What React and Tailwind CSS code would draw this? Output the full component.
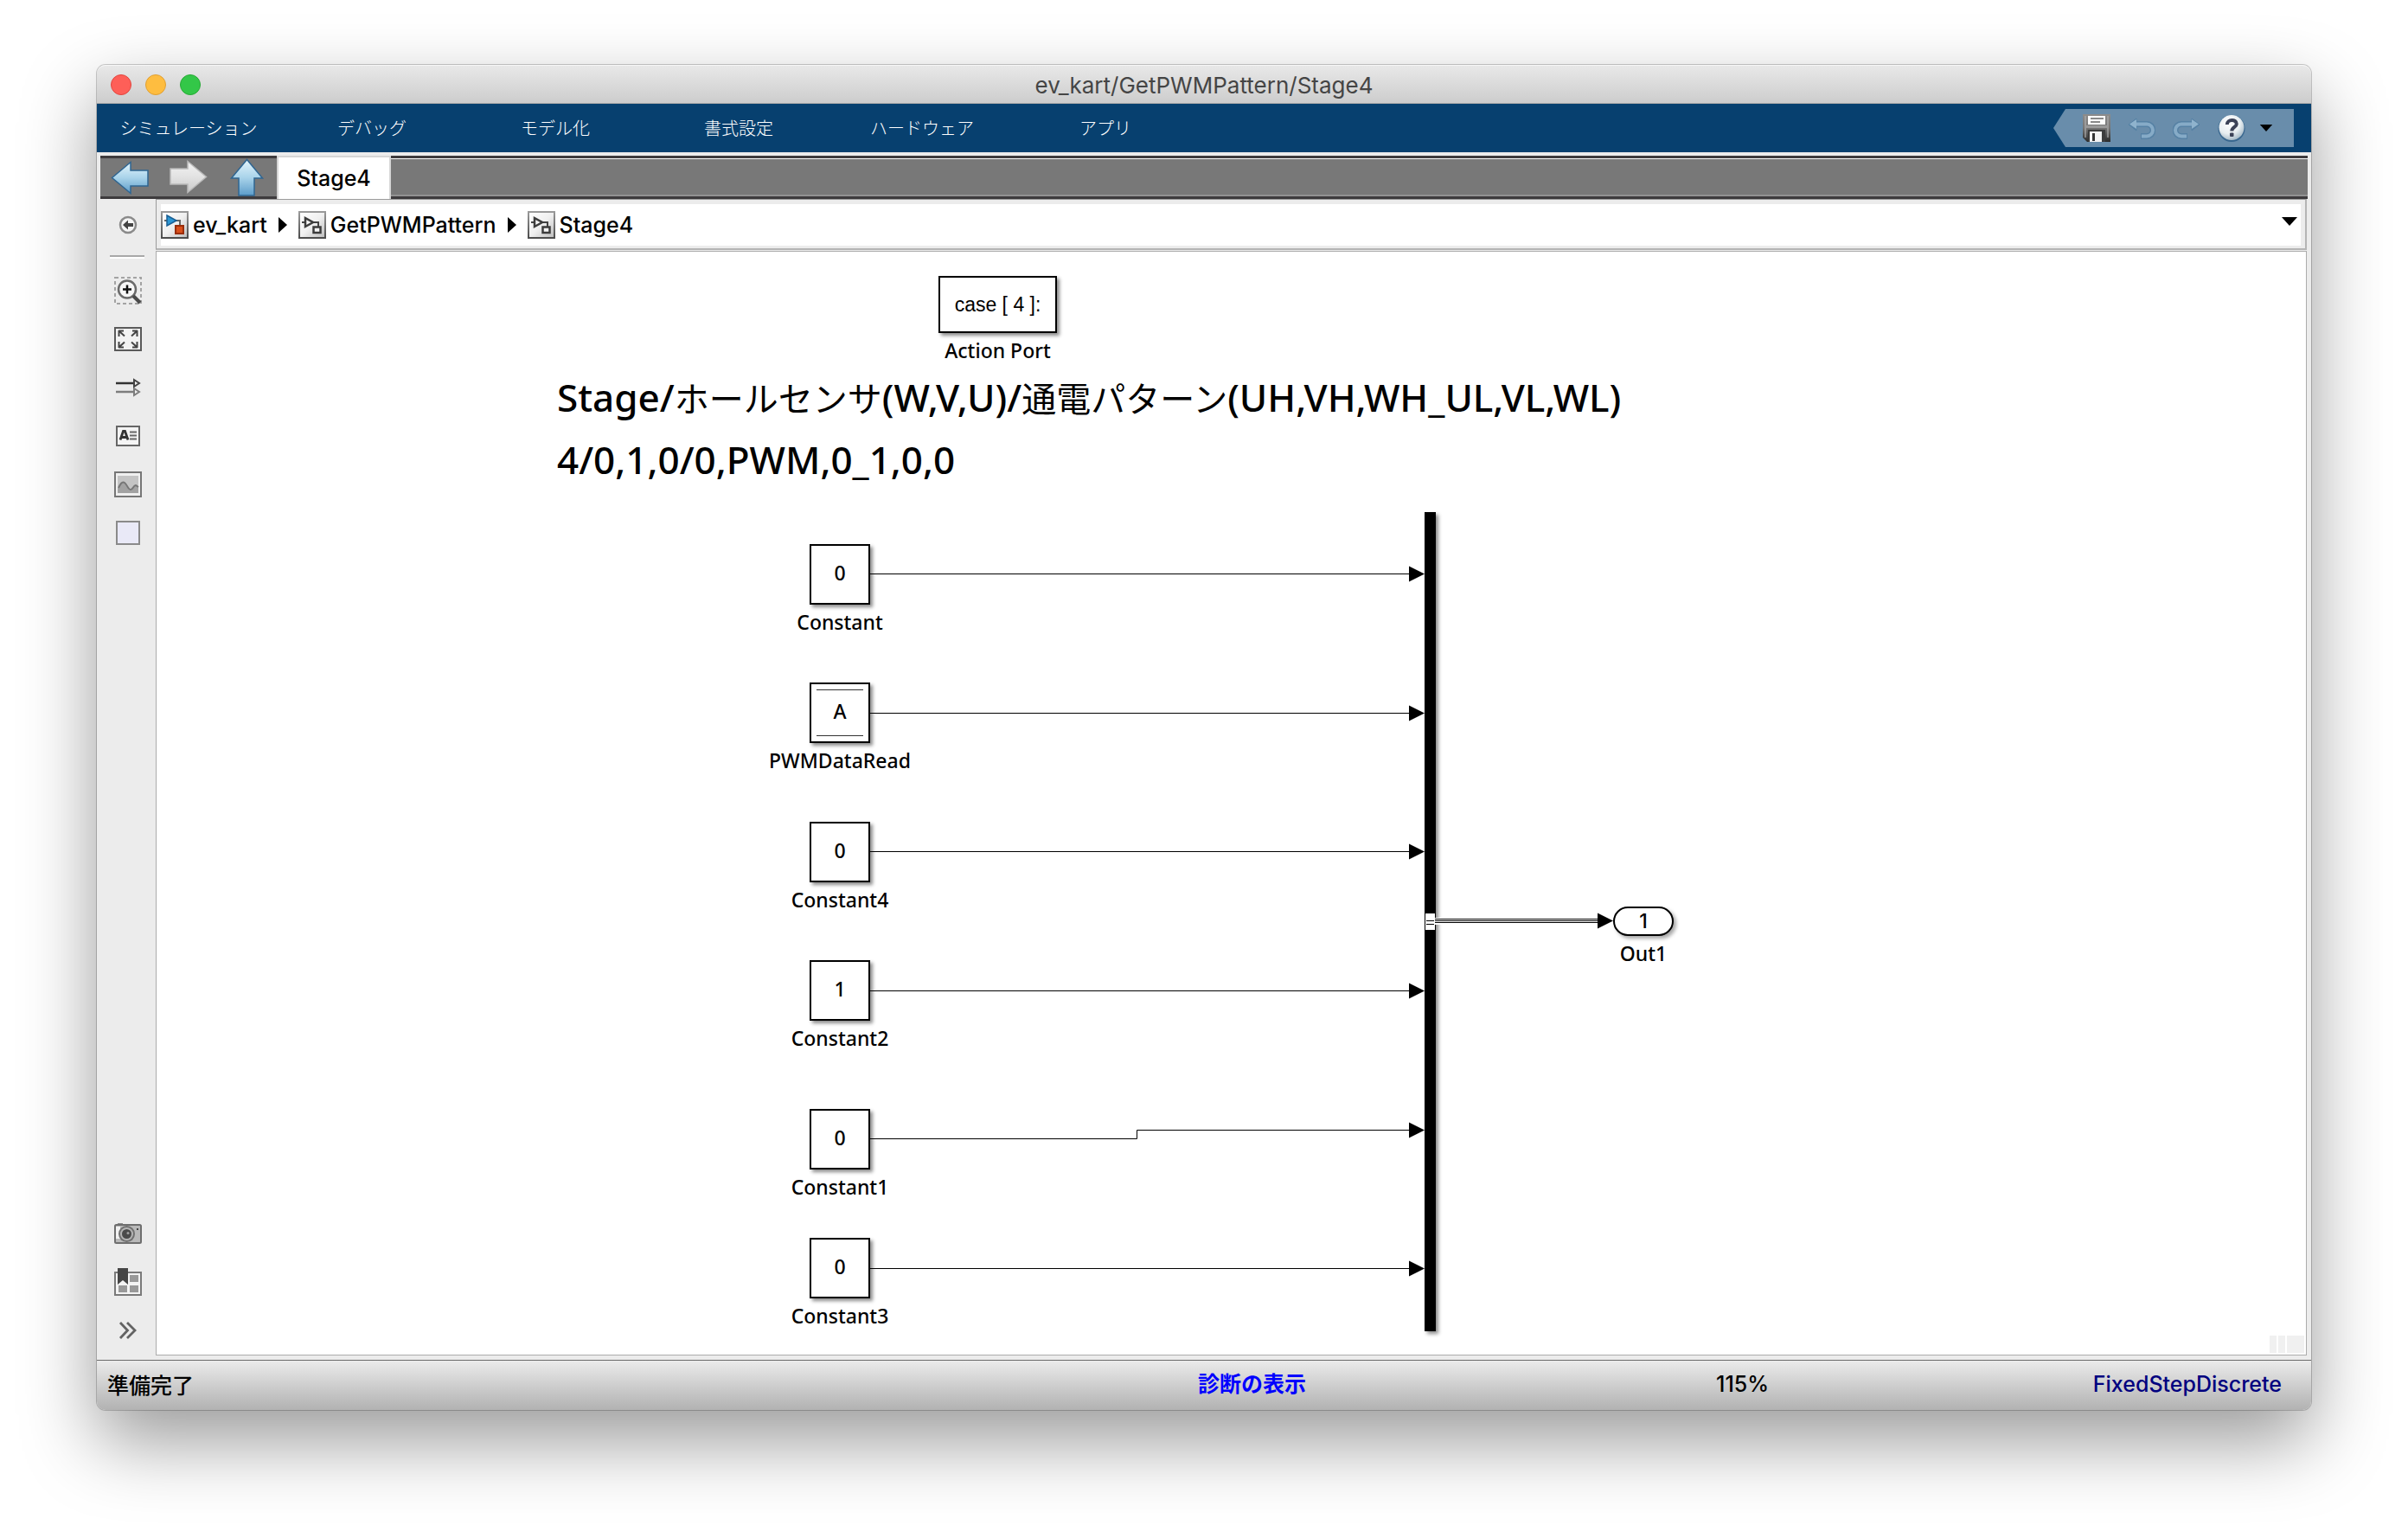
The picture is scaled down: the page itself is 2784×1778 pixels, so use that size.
import React from "react";

const UI = "font-[Inter,'Noto_Sans_CJK_JP',sans-serif]";
const LUCIDA = "font-['Noto_Sans','Noto_Sans_CJK_JP',sans-serif]";

const menus = ["シミュレーション", "デバッグ", "モデル化", "書式設定", "ハードウェア", "アプリ"];

/* ---------- title bar and tool strip icons ---------- */

function SaveIcon() {
  return (
    <svg viewBox="0 0 32 32" className="size-8" aria-hidden="true">
      <defs>
        <linearGradient id="disk" x1="0" y1="0" x2="0" y2="1">
          <stop offset="0" stopColor="#8c8c8c" />
          <stop offset=".5" stopColor="#757575" />
          <stop offset="1" stopColor="#2b2b2b" />
        </linearGradient>
      </defs>
      <path d="M0 0h32v32H5l-5-5z" fill="url(#disk)" />
      <path d="M2 2h2v11h24V2h2v25h-2V16H4v11H2z" fill="#b0b0b0" opacity=".6" />
      <path d="M6 2h20v10H6z" fill="#fdfdfd" />
      <path d="M9 5h15M9 9h11" stroke="#8a8a8a" strokeWidth="2" />
      <path d="M6 18h20v14H6z" fill="#3d3d3d" />
      <path d="M8 20h14v12H8z" fill="#f2f2f2" />
      <path d="M11 22h3v9h-3z" fill="#333" />
    </svg>
  );
}

function UndoIcon({ flip }) {
  return (
    <svg viewBox="0 0 32 32" className="size-8" aria-hidden="true">
      <g transform={flip ? "translate(32 0) scale(-1 1)" : undefined} fill="none">
        <path d="M7 11.500H22a6.500 6.500 0 0 1 0 14H15" stroke="#5681a4" strokeWidth="7" />
        <path d="M1 12L10 5v14z" fill="#5681a4" stroke="#5681a4" strokeWidth="1" />
        <path d="M8 11.500H22a6.500 6.500 0 0 1 0 14H16" stroke="#86abc7" strokeWidth="4" />
        <path d="M2 11.500L10 6v11z" fill="#8fb3cd" />
      </g>
    </svg>
  );
}

function HelpIcon() {
  return (
    <svg viewBox="0 0 32 32" className="size-8" aria-hidden="true">
      <defs>
        <radialGradient id="ball" cx=".4" cy=".3" r=".75">
          <stop offset="0" stopColor="#ffffff" />
          <stop offset=".6" stopColor="#e8eef1" />
          <stop offset="1" stopColor="#9fb4c2" />
        </radialGradient>
      </defs>
      <circle cx="16" cy="16.500" r="15.500" fill="#39678f" />
      <circle cx="16" cy="15.500" r="14.500" fill="url(#ball)" />
      <path d="M10.800 12c0-6.500 11-6.500 11-.8 0 4-5.500 3.500-5.500 8.300" fill="none" stroke="#3c4257" strokeWidth="4" />
      <rect x="14" y="21.500" width="4.500" height="4.500" rx="1" fill="#3c4257" />
    </svg>
  );
}

function Caret({ className }) {
  return (
    <svg viewBox="0 0 18 10" className={className} aria-hidden="true">
      <path d="M0 0h18L9 10z" fill="#000" />
    </svg>
  );
}

function NavArrow({ turn, muted }) {
  const id = muted ? "arrowMuted" : "arrowBlue" + turn;
  return (
    <svg viewBox="0 0 44 44" className="size-11" aria-hidden="true">
      <defs>
        <linearGradient id={id} x1="0" y1="0" x2={turn === 90 ? 1 : 0} y2={turn === 90 ? 0 : 1}>
          <stop offset="0" stopColor={muted ? "#c9c9c9" : "#e4f5fc"} />
          <stop offset=".5" stopColor={muted ? "#e2e2e2" : "#a9d3ea"} />
          <stop offset="1" stopColor={muted ? "#f3f3f3" : "#5c9cc9"} />
        </linearGradient>
      </defs>
      <path
        d="M1.500 22.500L23 4.500V14H43V32H23V40.500z"
        transform={`rotate(${turn} 22 22)`}
        fill={`url(#${id})`}
        stroke={muted ? "#b9b9b9" : "#2f6591"}
        strokeWidth="1.500"
      />
    </svg>
  );
}

/* ---------- model browser icons ---------- */

function ModelIcon({ root }) {
  return (
    <svg viewBox="0 0 32 32" className="size-8 shrink-0" aria-hidden="true">
      <defs>
        <linearGradient id="plate" x1="0" y1="0" x2="1" y2="1">
          <stop offset="0" stopColor="#fff" />
          <stop offset=".5" stopColor="#f0f0f0" />
          <stop offset="1" stopColor="#bcbcbc" />
        </linearGradient>
        <linearGradient id="frame" x1="0" y1="0" x2="0" y2="1">
          <stop offset="0" stopColor="#9a9a9a" />
          <stop offset="1" stopColor="#4c4c4c" />
        </linearGradient>
      </defs>
      <rect x="1" y="1" width="30" height="30" fill="url(#plate)" stroke="url(#frame)" strokeWidth="2" />
      {root ? (
        <>
          <path d="M4 11h3M16 11h6v6" fill="none" stroke="#666" strokeWidth="2" />
          <path d="M7 5l11 6-11 6z" fill="#2b96d3" stroke="#1a5f94" strokeWidth="1.500" />
          <rect x="17" y="17" width="9" height="9" fill="#d94f1b" stroke="#9a2e0a" strokeWidth="2" />
        </>
      ) : (
        <>
          <path d="M4 13h4M16 13h7v6" fill="none" stroke="#444" strokeWidth="2" />
          <path d="M8 8l9 5-9 5z" fill="#f4f4f4" stroke="#3c3c3c" strokeWidth="2.500" />
          <rect x="17.500" y="18.500" width="8" height="6.500" fill="#f4f4f4" stroke="#3c3c3c" strokeWidth="2.500" />
        </>
      )}
    </svg>
  );
}

function Chevron() {
  return (
    <svg viewBox="0 0 10 18" className="h-[18px] w-2.5 shrink-0" aria-hidden="true">
      <path d="M0 0l10 9-10 9z" fill="#000" />
    </svg>
  );
}

/* ---------- palette icons ---------- */

const palette = {
  hide: (
    <>
      <circle cx="16" cy="16" r="9" fill="#f6f6f6" stroke="#8a8a8a" strokeWidth="2.500" />
      <path d="M10 16l6-5.500V14h6v4h-6v3.500z" fill="#444" />
    </>
  ),
  zoom: (
    <>
      <rect x="1" y="1" width="30" height="30" fill="none" stroke="#a3a3a3" strokeWidth="2" strokeDasharray="4 3" />
      <circle cx="15" cy="14.500" r="10" fill="#f7f7f7" stroke="#6b6b6b" strokeWidth="2.500" />
      <path d="M22 22l8 8" stroke="#4a4a4a" strokeWidth="4" />
      <path d="M15 9.500v10M10 14.500h10" stroke="#111" strokeWidth="2.500" />
    </>
  ),
  fit: (
    <>
      <rect x="1" y="3" width="30" height="26" fill="#f2f2f2" stroke="#5a5a5a" strokeWidth="2" />
      <path d="M5 6.500h6M5.500 6v7M6 7l6 5.500M27 6.500h-6M26.500 6v7M26 7l-6 5.500M5 25.500h6M5.500 26v-7M6 25l6-5.500M27 25.500h-6M26.500 26v-7M26 25l-6-5.500" stroke="#444" strokeWidth="2" fill="none" />
    </>
  ),
  signals: (
    <>
      <path d="M2 21h20" stroke="#7d7d7d" strokeWidth="2.500" />
      <path d="M23 17l6 4-6 4z" fill="#eee" stroke="#7d7d7d" strokeWidth="2" />
      <path d="M2 11h20" stroke="#333" strokeWidth="2.500" />
      <path d="M23 7l6 4-6 4z" fill="#eee" stroke="#444" strokeWidth="2" />
    </>
  ),
  note: (
    <>
      <rect x="3" y="5" width="26" height="22" fill="#f4f4f4" stroke="#666" strokeWidth="2" />
      <path d="M7 20.500l3.500-10h2l3.500 10M8.500 17.500h6" stroke="#333" strokeWidth="2.800" fill="none" />
      <path d="M18 11.500h8M18 15.500h8M18 19.500h8" stroke="#666" strokeWidth="1.800" />
    </>
  ),
  image: (
    <>
      <rect x="1" y="2" width="30" height="28" fill="#f0f0f0" stroke="#767676" strokeWidth="2" />
      <rect x="4" y="6" width="24" height="20" fill="#c4c4c4" />
      <path d="M4 21c2-5 5-10 8-7 3 2 4 8 7 8 3 1 3-5 6-5l3 2v7H4z" fill="#a2a2a2" />
      <path d="M5 20c2-4 4-8 7-6 3 2 4 8 7 8s3-5 6-5l3 2" fill="none" stroke="#767676" strokeWidth="2" />
    </>
  ),
  area: <rect x="3" y="3" width="26" height="26" fill="#e9e9f7" stroke="#8a8a8a" strokeWidth="2" />,
  camera: (
    <>
      <path d="M4 4h6v3H4z" fill="#8a8a8a" />
      <rect x="1" y="6" width="30" height="21" rx="1.500" fill="#b8b8b8" stroke="#6e6e6e" strokeWidth="2" />
      <path d="M2 8h5v14H2z" fill="#f2f2f2" />
      <circle cx="14.500" cy="16.500" r="9.500" fill="#707070" />
      <circle cx="14.500" cy="16.500" r="7.500" fill="#b4b4b4" />
      <circle cx="14.500" cy="16.500" r="5.500" fill="#4a4a4a" />
      <circle cx="16" cy="15.500" r="1.500" fill="#9f9f9f" />
      <path d="M26 10h2v2h-2z" fill="#444" />
    </>
  ),
  library: (
    <>
      <rect x="1" y="5" width="30" height="26" fill="#f3f3f3" stroke="#7a7a7a" strokeWidth="2" />
      <path d="M18 8h10v8H18zM5 20h10v8H5zM18 20h10v8H18z" fill="#999" />
      <path d="M4 0h12v19l-6-5-6 5z" fill="#454545" />
    </>
  ),
  more: <path d="M7 7l8.500 9L7 25M15 7l9 9-9 9" fill="none" stroke="#636363" strokeWidth="2.800" />,
};

function PaletteButton({ icon, label }) {
  return (
    <button type="button" aria-label={label} className="flex h-14 w-full items-center justify-center pl-1">
      <svg viewBox="0 0 32 32" className="size-8" aria-hidden="true">
        {palette[icon]}
      </svg>
    </button>
  );
}

/* ---------- diagram ---------- */

const sources = [
  { name: "Constant", value: "0", y: 338 },
  { name: "PWMDataRead", value: "A", y: 498, memory: true },
  { name: "Constant4", value: "0", y: 659 },
  { name: "Constant2", value: "1", y: 819 },
  { name: "Constant1", value: "0", y: 991 },
  { name: "Constant3", value: "0", y: 1140 },
];

const wires = [
  { d: "M825 372.500H1450", y: 372 },
  { d: "M825 533.500H1450", y: 533 },
  { d: "M825 693.500H1450", y: 693 },
  { d: "M825 854.500H1450", y: 854 },
  { d: "M825 1025.500H1133.500V1015.500H1450", y: 1015 },
  { d: "M825 1175.500H1450", y: 1175 },
];

function BlockName({ children }) {
  return <span className="mt-1.5 text-[23px] leading-7 font-medium whitespace-nowrap">{children}</span>;
}

function SourceBlock({ name, value, y, memory }) {
  return (
    <div className="absolute left-[755px] flex w-[70px] flex-col items-center" style={{ top: y }}>
      <div className="flex size-[70px] flex-col items-center justify-center border-2 border-black bg-white px-1.5 shadow-[3px_3px_4px_rgba(0,0,0,0.45)]">
        {memory ? (
          <span className="my-1.5 flex w-full flex-1 items-center justify-center border-y border-[#333] pb-1 text-[23px] leading-7 font-medium">
            {value}
          </span>
        ) : (
          <span className="pb-1 text-[23px] leading-7 font-medium">{value}</span>
        )}
      </div>
      <BlockName>{name}</BlockName>
    </div>
  );
}

function Kana({ children }) {
  return <span className="text-[40px] font-normal">{children}</span>;
}

function Diagram() {
  return (
    <main className={`relative flex-1 overflow-hidden border border-[#acacac] bg-white text-black ${LUCIDA}`}>
      <div className="absolute top-7 left-[904px] flex w-[137px] flex-col items-center">
        <div className="flex h-[66px] w-full items-center justify-center border-2 border-black bg-white font-['Liberation_Sans',sans-serif] text-[23px] leading-7 shadow-[3px_3px_4px_rgba(0,0,0,0.45)]">
          case [ 4 ]:
        </div>
        <BlockName>Action Port</BlockName>
      </div>

      <div className="absolute top-[133px] left-[463px] text-[44px] leading-[71px] font-medium whitespace-nowrap">
        <p>
          Stage/<Kana>ホールセンサ</Kana>(W,V,U)/<Kana>通電パターン</Kana>(UH,VH,WH_UL,VL,WL)
        </p>
        <p>4/0,1,0/0,PWM,0_1,0,0</p>
      </div>

      <div className="absolute top-[301px] left-[1466px] h-[947px] w-[13px] bg-black shadow-[3px_3px_4px_rgba(0,0,0,0.45)]" />
      {sources.map((s) => (
        <SourceBlock key={s.name} {...s} />
      ))}

      <svg className="absolute inset-0 size-full" aria-hidden="true">
        {wires.map((w) => (
          <g key={w.d}>
            <path d={w.d} fill="none" stroke="#000" />
            <path d={`M1448 ${w.y - 8.500}L1466 ${w.y + 0.5}L1448 ${w.y + 9.5}z`} />
          </g>
        ))}
        <path d="M1467 765h11v19h-11z" fill="#fff" />
        <path d="M1468 773.500h10M1468 777.500h10" stroke="#000" />
        <path d="M1477 770h190v8h-190z" fill="#fff" />
        <path d="M1478 771.500H1667M1478 773.500H1667M1478 775.500H1667" stroke="#000" />
        <path d="M1666 764.500L1684 773.500L1666 782.500z" />
      </svg>

      <div className="absolute top-[757px] left-[1684px] flex w-[70px] flex-col items-center">
        <div className="flex h-[34px] w-full items-center justify-center rounded-full border-2 border-black bg-white font-[Inter,sans-serif] text-[23px] leading-7 font-medium shadow-[3px_3px_4px_rgba(0,0,0,0.35)]">
          1
        </div>
        <BlockName>Out1</BlockName>
      </div>

      <div className="absolute right-0.5 bottom-0.5 flex h-5 gap-0.5">
        <span className="w-2 bg-[#f0f0f0]" />
        <span className="w-2 bg-[#f0f0f0]" />
        <span className="w-5 bg-[#f0f0f0]" />
      </div>
    </main>
  );
}

/* ---------- window ---------- */

export default function App() {
  return (
    <div className={`flex min-h-screen flex-col bg-white px-28 pt-[75px] pb-[148px] ${UI}`}>
      <div className="flex flex-1 flex-col rounded-[10px] bg-[#ececec] shadow-[0_0_0_1px_rgba(0,0,0,0.2),0_36px_86px_rgba(0,0,0,0.4)]">
        <header className="flex h-[45px] items-center rounded-t-[10px] border-t border-b border-t-[#f6f6f6] border-b-[#a9a9a9] bg-linear-to-b from-[#e8e8e8] to-[#cdcdcd] px-4">
          <div className="flex flex-1 gap-4">
            <button type="button" aria-label="閉じる" className="size-6 rounded-full border border-[#e2463f] bg-[#fe5f58]" />
            <button type="button" aria-label="最小化" className="size-6 rounded-full border border-[#e0a033] bg-[#febd40]" />
            <button type="button" aria-label="拡大" className="size-6 rounded-full border border-[#27aa35] bg-[#33c748]" />
          </div>
          <h1 className="pt-0.5 text-[26px] leading-8 text-[#454545]">ev_kart/GetPWMPattern/Stage4</h1>
          <div className="flex-1" />
        </header>

        <div className="flex h-14 items-center justify-between bg-[#07406f] pr-5">
          <nav className="flex h-full">
            {menus.map((m) => (
              <button
                key={m}
                type="button"
                className="w-[212px] font-['Noto_Sans_CJK_JP',sans-serif] text-xl font-light text-white"
              >
                {m}
              </button>
            ))}
          </nav>
          <div className="flex h-11 items-center gap-5 bg-[#698dab] pr-6 pl-[34px] [clip-path:polygon(14px_0,100%_0,100%_100%,14px_100%,0_50%)]">
            <button type="button" aria-label="保存"><SaveIcon /></button>
            <button type="button" aria-label="元に戻す"><UndoIcon /></button>
            <button type="button" aria-label="やり直し"><UndoIcon flip /></button>
            <button type="button" aria-label="ヘルプ"><HelpIcon /></button>
            <button type="button" aria-label="ヘルプ メニュー" className="-ml-1"><Caret className="h-2 w-4" /></button>
          </div>
        </div>

        <div className="mx-1 mt-1 flex h-[50px] bg-[#787878]">
          <div className="flex w-[204px] items-center gap-6 border-t-3 border-b-3 border-[#3d3b3d] pl-3">
            <button type="button" aria-label="戻る"><NavArrow turn={0} /></button>
            <button type="button" aria-label="進む"><NavArrow turn={180} muted /></button>
            <button type="button" aria-label="上へ"><NavArrow turn={90} /></button>
          </div>
          <button type="button" className="w-[132px] border-t-2 border-r-2 border-l-2 border-[#d6d6d6] bg-white text-[25px] leading-8 font-medium text-black">
            Stage4
          </button>
          <div className="flex-1 border-t-3 border-b-3 border-[#3d3b3d]">
            <div className="h-full border-t border-b-2 border-t-white border-b-[#929292]" />
          </div>
        </div>

        <div className="flex flex-1">
          <aside className="flex w-[68px] flex-col pt-0.5 pb-1.5">
            <PaletteButton icon="hide" label="エクスプローラー バーを隠す" />
            <div className="mt-[7px] mb-[9px] ml-[15px] h-1 w-10 border-t-2 border-b-2 border-t-[#a8a8a8] border-b-white" />
            <PaletteButton icon="zoom" label="ズーム" />
            <PaletteButton icon="fit" label="ビューに合わせる" />
            <PaletteButton icon="signals" label="サンプル時間" />
            <PaletteButton icon="note" label="注釈" />
            <PaletteButton icon="image" label="イメージ" />
            <PaletteButton icon="area" label="領域" />
            <div className="flex-1" />
            <PaletteButton icon="camera" label="スクリーンショット" />
            <PaletteButton icon="library" label="モデル データ" />
            <PaletteButton icon="more" label="さらに表示" />
          </aside>

          <div className="mr-[5px] mb-[5px] flex flex-1 flex-col gap-px">
            <div className="border border-r-2 border-b-2 border-[#9b9b9b] border-r-[#b4b4b4] border-b-[#b4b4b4] p-[5px] pb-[3px]">
              <nav className="flex h-12 items-center gap-[13px] bg-white pr-1 text-[25px] leading-8 font-medium text-black">
                <a href="#ev_kart" className="flex items-center gap-[5px]"><ModelIcon root />ev_kart</a>
                <Chevron />
                <a href="#GetPWMPattern" className="flex items-center gap-[5px]"><ModelIcon />GetPWMPattern</a>
                <Chevron />
                <a href="#Stage4" className="flex items-center gap-[5px]"><ModelIcon />Stage4</a>
                <button type="button" aria-label="履歴" className="ml-auto pb-2"><Caret className="h-2.5 w-[18px]" /></button>
              </nav>
            </div>
            <Diagram />
          </div>
        </div>

        <footer className="grid h-[58px] grid-cols-[1273fr_599fr_688fr] items-center rounded-b-[10px] border-t border-[#6b6b6b] bg-linear-to-b from-[#ebebeb] to-[#b2b2b2] pb-1 text-[25px] leading-8 text-black">
          <span className="pl-3 font-['Noto_Sans_CJK_JP',sans-serif] font-medium">準備完了</span>
          <a href="#diagnostics" className="pb-1 font-['Noto_Sans_CJK_JP',sans-serif] font-bold text-[#0000ff]">診断の表示</a>
          <span className="flex justify-between pr-[34px] font-medium">
            115%
            <a href="#solver" className="text-[#00007f]">FixedStepDiscrete</a>
          </span>
        </footer>
      </div>
    </div>
  );
}
